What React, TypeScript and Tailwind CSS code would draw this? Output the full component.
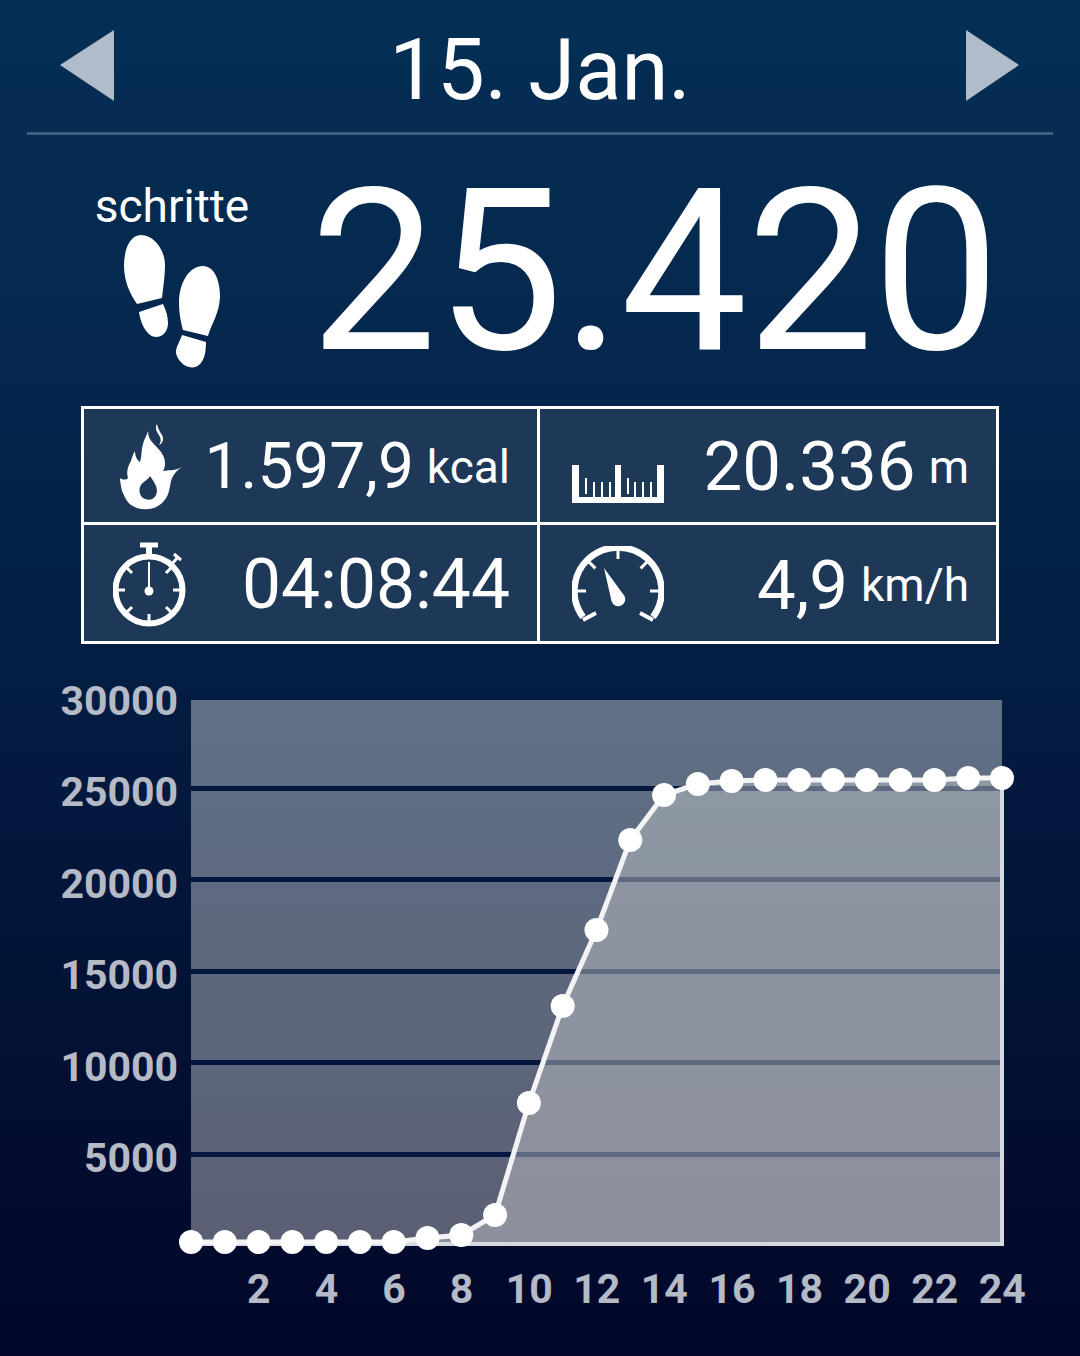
const values = [1242, 1242, 1242, 1242, 1242, 1242, 1242, 1238, 1235, 1215, 1103, 1006, 930, 840, 795, 784, 781, 780, 780, 780, 780, 780, 780, 778, 778];

const px = (h: number) => h * 33.79;
const py = (v: number) => v - 700;

function Triangle({ dir }: { dir: "left" | "right" }) {
  return (
    <svg width="56" height="72" viewBox="0 0 56 72" className="shrink-0">
      <polygon points={dir === "left" ? "54,0 0,35 54,71" : "2,0 55,35 2,71"} fill="#b0bcca" />
    </svg>
  );
}

function Feet() {
  return (
    <svg width="98" height="134" viewBox="0 0 98 134" fill="#fff">
      <path d="M17 0C6 0 0 14 0 31c0 15 6 28 13 38l25-6c1-9 3-22 3-33C41 15 30 0 17 0z" />
      <path d="M15 77l24-8c3 6 5 13 5 19 0 8-5 14-12 14-8 0-15-11-17-25z" />
      <path d="M79 31c-14 0-24 17-24 37 0 10 2 20 4 27l25 6c3-11 12-24 12-40 0-16-6-30-17-30z" />
      <path d="M58 100l24 7c0 11-2 19-7 23-3 3-9 3-13 1-6-3-10-10-10-14 0-5 4-11 6-17z" />
    </svg>
  );
}

function Flame() {
  return (
    <svg width="64" height="86" viewBox="0 0 64 86" fill="#fff">
      <path d="M37 0c-3 5 1 9 3 13 1 3 1 5-1 8 4-2 5-6 3-10-2-3-4-6-5-11z" />
      <path
        fillRule="evenodd"
        d="M28 7c0 10 7 13 13 21 5 7 5 14 2 19 5-1 12 0 19-4-6 4-9 8-11 14-2 11-3 19-13 25-8 5-20 4-27-1-5-4-6-8-9-14-1-5-2-9-2-13 3 2 6 2 8 0-2-6 0-12 3-17 1-4 2-7 4-10 0 5 2 9 5 11 2-6 1-12 3-18 1-5 4-9 5-13zm2 45c-1 3-6 5-9 9-3 5-1 11 2 13 5 3 11 2 13-3 3-7-2-13-6-19z"
      />
    </svg>
  );
}

function Ruler() {
  const shortTicks = [13, 21, 29, 37, 55, 62, 70, 78];
  return (
    <svg width="92" height="38" viewBox="0 0 92 38" fill="#fff">
      <rect x="0" y="0" width="7" height="38" />
      <rect x="43" y="0" width="6" height="38" />
      <rect x="85" y="0" width="7" height="38" />
      <rect x="0" y="32" width="92" height="6" />
      {shortTicks.map((x, i) => (
        <rect key={x} x={x} y={i % 4 === 0 ? 13 : 17} width="2" height="16" />
      ))}
    </svg>
  );
}

function Stopwatch() {
  const ticks = [45, 90, 135, 180, 225, 270, 315];
  return (
    <svg width="74" height="86" viewBox="0 0 74 86" fill="none" stroke="#fff">
      <path d="M27 3h18" strokeWidth="5" />
      <path d="M36 3v12" strokeWidth="6" />
      <path d="M58 23l7-8M61 12l7 6" strokeWidth="3" />
      <circle cx="36" cy="48" r="33.500" strokeWidth="6" />
      {ticks.map((t) => (
        <path key={t} d="M36 16v8" strokeWidth="3" transform={`rotate(${t} 36 48)`} />
      ))}
      <path d="M36 20v28" strokeWidth="2" />
      <circle cx="36" cy="49" r="4.500" fill="#fff" stroke="none" />
    </svg>
  );
}

function Gauge() {
  const ticks = [-90, -45, 0, 45, 90];
  return (
    <svg width="92" height="76" viewBox="0 0 92 76" fill="none" stroke="#fff">
      <path d="M11 71A43.600 43.600 0 1 1 81 71" strokeWidth="6.500" />
      <path d="M11 74l13-7M81 74l-13-7" strokeWidth="4" />
      {ticks.map((t) => (
        <path key={t} d="M46 3v10" strokeWidth="3" transform={`rotate(${t} 46 45)`} />
      ))}
      <path d="M32 22L39.500 55A7 7 0 1 0 52.500 50z" fill="#fff" stroke="none" />
    </svg>
  );
}

function Stat({
  icon,
  value,
  unit,
  iconClass,
  valueClass,
  rowClass,
}: {
  icon: React.ReactNode;
  value: string;
  unit?: string;
  iconClass: string;
  valueClass: string;
  rowClass: string;
}) {
  return (
    <div className={`flex items-center justify-between bg-[#1e3858] pr-[27px] ${rowClass}`}>
      <div className={iconClass}>{icon}</div>
      <div className="flex items-center gap-[13px] leading-none">
        <span className={valueClass}>{value}</span>
        {unit && <span className="text-[46px]">{unit}</span>}
      </div>
    </div>
  );
}

export default function App() {
  const line = values.map((v, i) => `${px(i)},${py(v)}`).join(" ");
  return (
    <div
      className="flex h-[1356px] w-[1080px] flex-col overflow-hidden bg-gradient-to-b from-[#052f55] via-[#05264c] via-30% to-[#020729] text-white"
      style={{ fontFamily: "Roboto, sans-serif" }}
    >
      <header className="mx-[27px] flex h-[135px] items-center justify-between border-b-[3px] border-[#3e5f80] pl-[33px] pr-[33px]">
        <Triangle dir="left" />
        <h1 className="mt-[8px] text-[85px] leading-none">15. Jan.</h1>
        <Triangle dir="right" />
      </header>

      <section className="flex h-[271px] pl-[95px] pt-[48px]">
        <div className="flex w-[154px] flex-col items-center">
          <span className="text-[46px] leading-[46px]">schritte</span>
          <div className="ml-[2px] mt-[6px]">
            <Feet />
          </div>
        </div>
        <div className="ml-[61px] text-[226px] leading-[178px] tracking-[-1px]">25.420</div>
      </section>

      <section className="mx-[81px] grid w-[918px] grid-cols-[453px_1fr] gap-[3px] border-[3px] border-white bg-white">
        <Stat icon={<Flame />} iconClass="ml-[36px]" value="1.597,9" unit="kcal" valueClass="text-[64px]" rowClass="h-[113px] pt-[2px]" />
        <Stat icon={<Ruler />} iconClass="ml-[32px] mt-[35px]" value="20.336" unit="m" valueClass="text-[69px]" rowClass="h-[113px] pt-[2px]" />
        <Stat icon={<Stopwatch />} iconClass="ml-[29px]" value="04:08:44" valueClass="text-[69.500px]" rowClass="h-[116px] pt-[4px]" />
        <Stat icon={<Gauge />} iconClass="ml-[32px] -mt-[2px]" value="4,9" unit="km/h" valueClass="text-[69px]" rowClass="h-[116px] pt-[4px]" />
      </section>

      <section className="mt-[56px] flex">
        <div className="flex w-[178px] shrink-0 flex-col items-end text-[41px] font-bold leading-none text-[#b4bac6]">
          {[30000, 25000, 20000, 15000, 10000, 5000].map((v) => (
            <div key={v} className="flex h-[91.400px] items-start">
              <span className="-mt-[19px]">{v}</span>
            </div>
          ))}
        </div>
        <div className="ml-[13px] h-[543px] w-[811px]">
          <svg width="811" height="543" viewBox="0 0 811 543" className="overflow-visible">
            <defs>
              <linearGradient id="plot" x1="0" y1="0" x2="0" y2="1">
                <stop offset="0" stopColor="#5f7085" />
                <stop offset="1" stopColor="#5b5f74" />
              </linearGradient>
            </defs>
            <rect width="811" height="543" fill="url(#plot)" />
            {[88.500, 179.500, 271.500, 362.500, 454.500].map((y) => (
              <rect key={y} x="0" y={y - 2.5} width="811" height="5" fill="#03173f" />
            ))}
            <polygon points={`${line} 811,543 0,543`} fill="#c3c4c8" fillOpacity="0.48" />
            <path d="M811 78V544H0" fill="none" stroke="#d6d9df" strokeWidth="4" />
            <polyline points={line} fill="none" stroke="#f3f3f5" strokeWidth="5" />
            {values.map((v, i) => (
              <circle key={i} cx={px(i)} cy={py(v)} r="12" fill="#fff" />
            ))}
          </svg>
          <div className="ml-[34px] mt-[26px] flex w-[811px] text-[41px] font-bold leading-none text-[#b4bac6]">
            {[2, 4, 6, 8, 10, 12, 14, 16, 18, 20, 22, 24].map((h) => (
              <div key={h} className="flex w-[67.600px] shrink-0 justify-center">
                {h}
              </div>
            ))}
          </div>
        </div>
      </section>
    </div>
  );
}
